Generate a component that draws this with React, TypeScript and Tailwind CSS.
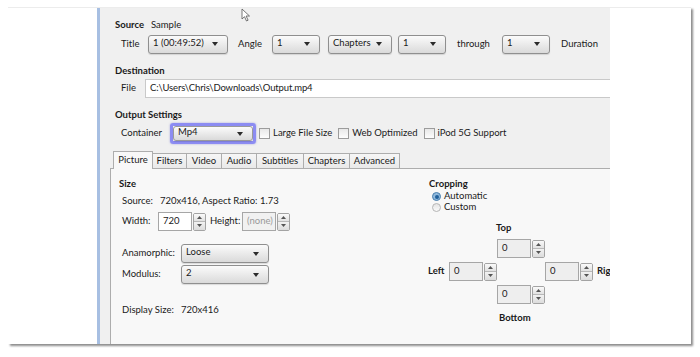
import React from "react";

const font = { fontFamily: "Lato, 'Open Sans', sans-serif" };

function Caret() {
  return (
    <svg width="6" height="4" viewBox="0 0 6 4" className="shrink-0">
      <path d="M0 0h6L3 4z" fill="#2b2b2b" />
    </svg>
  );
}

function Select({ value, className }: { value: string; className: string }) {
  return (
    <div
      className={`flex shrink-0 items-center justify-between rounded-[3px] border border-[#8f8f8f] bg-gradient-to-b from-[#fbfbfb] to-[#dadada] pl-[4px] pr-[9px] text-[9.5px] leading-none text-[#1a1a1a] shadow-[0_1px_1px_rgba(0,0,0,0.12)] ${className}`}
    >
      <span className="-mt-[3px]">{value}</span>
      <Caret />
    </div>
  );
}

function Spinner() {
  return (
    <div className="flex h-[18px] w-[13px] shrink-0 flex-col overflow-hidden rounded-[2px] border border-[#a3a3a3]">
      <div className="flex flex-1 items-center justify-center border-b border-[#b8b8b8] bg-gradient-to-b from-[#fafafa] to-[#e2e2e2]">
        <svg width="5" height="3" viewBox="0 0 5 3">
          <path d="M0 3h5L2.5 0z" fill="#555" />
        </svg>
      </div>
      <div className="flex flex-1 items-center justify-center bg-gradient-to-b from-[#f2f2f2] to-[#dcdcdc]">
        <svg width="5" height="3" viewBox="0 0 5 3">
          <path d="M0 0h5L2.5 3z" fill="#555" />
        </svg>
      </div>
    </div>
  );
}

function SpinBox({ value, bg, muted }: { value: string; bg: string; muted?: boolean }) {
  return (
    <div className="flex shrink-0 items-center gap-[1px]">
      <div
        className={`flex h-[19px] w-[34px] items-center border border-[#a6a6a6] pl-[4px] text-[9.5px] ${bg} ${
          muted ? "text-[#9a9a9a]" : "text-[#1a1a1a]"
        }`}
      >
        {value}
      </div>
      <Spinner />
    </div>
  );
}

function Check({ label }: { label: string }) {
  return (
    <div className="flex items-center gap-[3px]">
      <div className="h-[11px] w-[11px] border border-[#9c9c9c] bg-gradient-to-b from-[#e8e8e8] to-[#fdfdfd]" />
      <span className="text-[9.5px] text-[#1a1a1a]">{label}</span>
    </div>
  );
}

function Radio({ on, label }: { on?: boolean; label: string }) {
  return (
    <div className="flex h-[11px] items-center gap-[3px]">
      <div
        className={`flex h-[9px] w-[9px] items-center justify-center rounded-full border ${
          on ? "border-[#4a7fae] bg-[#8fb8dc]" : "border-[#b5b5b5] bg-gradient-to-b from-[#e4e4e4] to-[#fafafa]"
        }`}
      >
        {on && <div className="h-[4px] w-[4px] rounded-full bg-[#1f5f9a]" />}
      </div>
      <span className="text-[9.5px] text-[#1a1a1a]">{label}</span>
    </div>
  );
}

const tabs = [
  { name: "Picture", w: "w-[40px]" },
  { name: "Filters", w: "w-[35px]" },
  { name: "Video", w: "w-[36px]" },
  { name: "Audio", w: "w-[36px]" },
  { name: "Subtitles", w: "w-[48px]" },
  { name: "Chapters", w: "w-[47px]" },
  { name: "Advanced", w: "w-[51px]" },
];

function Cursor() {
  return (
    <svg width="10" height="14" viewBox="0 0 10 14" className="absolute left-[141px] top-[0px]">
      <path d="M1 1v10l2.5-2.3 2 4.3 1.6-.8-2-4.2H8.5z" fill="#fff" stroke="#555" strokeWidth="0.8" />
    </svg>
  );
}

export default function App() {
  return (
    <div className="h-[357px] w-[700px] overflow-hidden bg-white pl-[8px] pt-[7px]" style={font}>
      <div className="flex h-[337px] w-[683px] border-t border-[#ececec] bg-white shadow-[2px_2px_2px_rgba(0,0,0,0.45)]">
        <div className="w-[89px] shrink-0" />
        <div className="w-[3px] shrink-0 bg-[#a7bfe2]" />
        <div className="relative flex w-[510px] shrink-0 flex-col overflow-hidden bg-[#f0f0f0]">
          <Cursor />
          {/* Source */}
          <div className="ml-[15px] mt-[10px] flex h-[14px] items-center gap-[7px] text-[9.5px] text-[#1a1a1a]">
            <span className="font-bold">Source</span>
            <span>Sample</span>
          </div>
          <div className="ml-[21px] mt-[2px] flex h-[20px] items-center text-[9.5px] text-[#1a1a1a]">
            <span className="w-[27px]">Title</span>
            <Select value="1 (00:49:52)" className="h-[19px] w-[80px]" />
            <span className="ml-[10px] w-[34px]">Angle</span>
            <Select value="1" className="h-[19px] w-[48px]" />
            <Select value="Chapters" className="ml-[8px] h-[19px] w-[64px]" />
            <Select value="1" className="ml-[6px] h-[19px] w-[48px]" />
            <span className="ml-[11px] w-[45px]">through</span>
            <Select value="1" className="h-[19px] w-[48px]" />
            <span className="ml-[11px]">Duration</span>
          </div>

          {/* Destination */}
          <div className="ml-[15px] mt-[10px] flex h-[14px] items-center text-[9.5px] font-bold text-[#1a1a1a]">
            Destination
          </div>
          <div className="mt-[1px] flex h-[19px] items-center text-[9.5px] text-[#1a1a1a]">
            <span className="ml-[21px] w-[24px]">File</span>
            <div className="flex h-[19px] flex-1 items-center border-y border-l border-[#c9c9c9] bg-white pl-[4px] tracking-[-0.15px]">
              C:\Users\Chris\Downloads\Output.mp4
            </div>
          </div>

          {/* Output settings */}
          <div className="ml-[15px] mt-[10px] flex h-[14px] items-center text-[9.5px] font-bold text-[#1a1a1a]">
            Output Settings
          </div>
          <div className="ml-[21px] mt-[1px] flex h-[21px] items-center text-[9.5px] text-[#1a1a1a]">
            <span className="w-[49px]">Container</span>
            <div className="flex h-[21px] w-[86px] items-center rounded-[3px] border-[3px] border-[#8c8cf2] shadow-[0_0_2px_rgba(80,80,200,0.5)]">
              <Select value="Mp4" className="h-[15px] w-full rounded-[1px] border-[#9a9a9a]" />
            </div>
            <div className="ml-[3px] flex items-center gap-[6px]">
              <Check label="Large File Size" />
              <Check label="Web Optimized" />
              <Check label="iPod 5G Support" />
            </div>
          </div>

          {/* Tabs */}
          <div className="ml-[13px] mt-[8px] flex h-[17px] items-end text-[9.5px] text-[#1a1a1a]">
            {tabs.map((t, i) => (
              <div
                key={t.name}
                className={`flex items-center justify-center border border-[#adadad] ${t.w} ${
                  i === 0
                    ? "relative z-10 h-[18px] border-b-0 bg-[#f8f8f8]"
                    : "-ml-[1px] h-[16px] bg-gradient-to-b from-[#f6f6f6] to-[#e9e9e9]"
                }`}
              >
                {t.name}
              </div>
            ))}
          </div>
          <div className="ml-[10px] -mt-[1px] flex flex-1 border-l border-t border-[#adadad] bg-[#f8f8f8] text-[9.5px] text-[#1a1a1a]">
            {/* Size column */}
            <div className="flex w-[318px] shrink-0 flex-col pl-[8px]">
              <div className="mt-[8px] flex h-[14px] items-center font-bold">Size</div>
              <div className="mt-[3px] flex h-[14px] items-center pl-[3px]">
                <span className="w-[38px]">Source:</span>
                <span>720x416, Aspect Ratio: 1.73</span>
              </div>
              <div className="mt-[4px] flex h-[19px] items-center pl-[3px]">
                <span className="w-[36px]">Width:</span>
                <SpinBox value="720" bg="bg-white" />
                <span className="ml-[4px] w-[32px]">Height:</span>
                <SpinBox value="(none)" bg="bg-[#f1f1f1]" muted />
              </div>
              <div className="mt-[13px] flex h-[19px] items-center pl-[3px]">
                <span className="w-[59px]">Anamorphic:</span>
                <Select value="Loose" className="h-[19px] w-[88px]" />
              </div>
              <div className="mt-[2px] flex h-[19px] items-center pl-[3px]">
                <span className="w-[59px]">Modulus:</span>
                <Select value="2" className="h-[19px] w-[88px]" />
              </div>
              <div className="mt-[19px] flex h-[14px] items-center pl-[3px]">
                <span className="w-[59px]">Display Size:</span>
                <span>720x416</span>
              </div>
            </div>

            {/* Cropping column */}
            <div className="-ml-[1px] flex shrink-0 flex-col">
              <div className="ml-[1px] mt-[8px] flex h-[14px] items-center font-bold">Cropping</div>
              <div className="ml-[4px] flex flex-col">
                <Radio on label="Automatic" />
                <Radio label="Custom" />
              </div>
              <div className="mt-[8px] grid grid-cols-[21px_48px_48px_48px_40px] grid-rows-[14px_19px_19px_19px_17px] gap-y-[4px]">
                <div />
                <div />
                <div className="-ml-[1px] flex items-end font-bold">Top</div>
                <div />
                <div />

                <div />
                <div />
                <SpinBox value="0" bg="bg-[#eeeeee]" />
                <div />
                <div />

                <div className="flex items-center font-bold">Left</div>
                <SpinBox value="0" bg="bg-[#eeeeee]" />
                <div />
                <SpinBox value="0" bg="bg-[#eeeeee]" />
                <div className="flex items-center pl-[4px] font-bold">Right</div>

                <div />
                <div />
                <SpinBox value="0" bg="bg-[#eeeeee]" />
                <div />
                <div />

                <div />
                <div />
                <div className="flex items-end pl-[2px] font-bold">Bottom</div>
                <div />
                <div />
              </div>
            </div>
          </div>
        </div>
        <div className="flex-1" />
      </div>
    </div>
  );
}
